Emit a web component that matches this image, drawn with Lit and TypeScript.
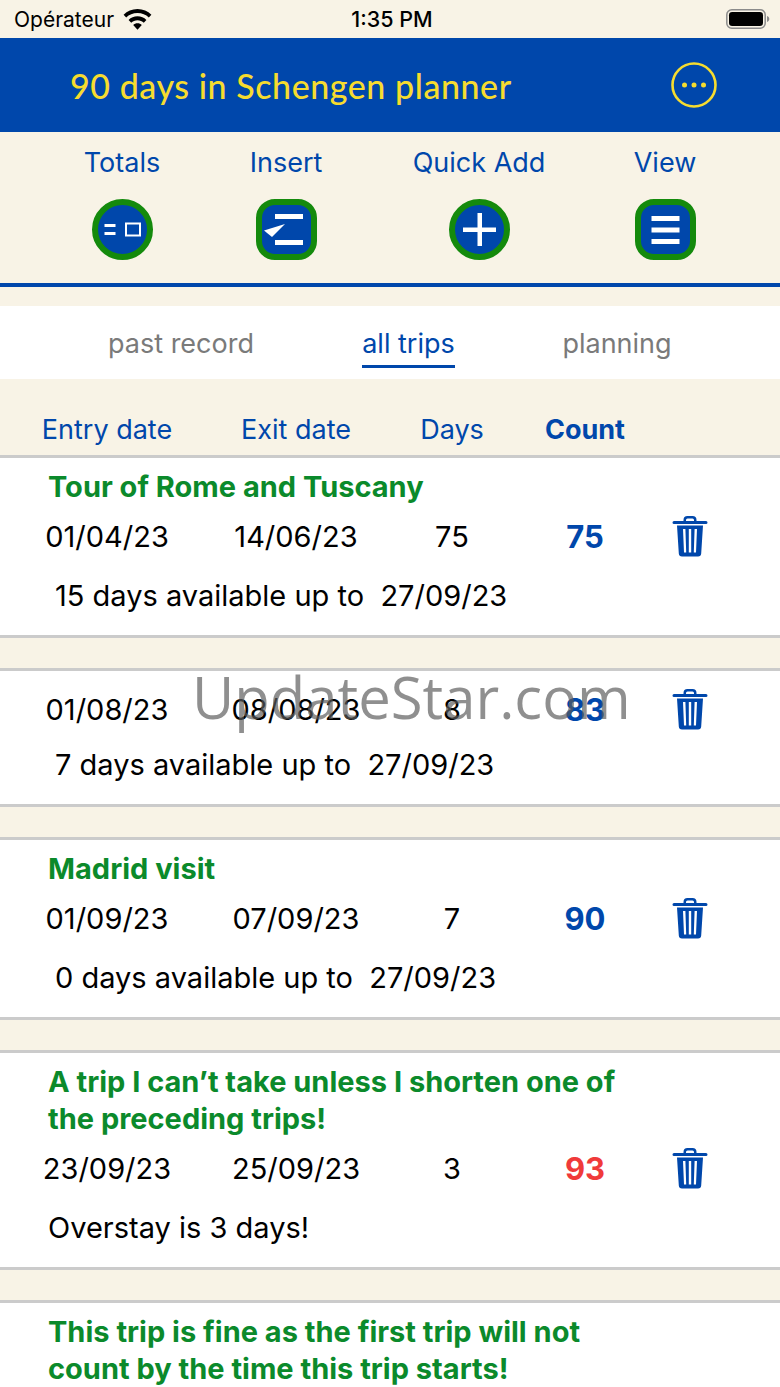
import { LitElement, html, css, svg } from "lit";
import { customElement } from "lit/decorators.js";

interface Trip {
  title?: string[];
  entry: string;
  exit: string;
  days: string;
  count: string;
  note: string;
  over?: boolean;
  gap?: string;
}

const trips: Trip[] = [
  { title: ["Tour of Rome and Tuscany"], entry: "01/04/23", exit: "14/06/23", days: "75", count: "75", note: "15 days available up to  27/09/23" },
  { entry: "01/08/23", exit: "08/08/23", days: "8", count: "83", note: "7 days available up to  27/09/23", gap: "short" },
  { title: ["Madrid visit"], entry: "01/09/23", exit: "07/09/23", days: "7", count: "90", note: "0 days available up to  27/09/23" },
  { title: ["A trip I can’t take unless I shorten one of", "the preceding trips!"], entry: "23/09/23", exit: "25/09/23", days: "3", count: "93", note: "Overstay is 3 days!", over: true },
  { title: ["This trip is fine as the first trip will not", "count by the time this trip starts!"], entry: "", exit: "", days: "", count: "", note: "" },
];

const trash = svg`<svg class="trash" viewBox="0 0 36 41" width="36" height="41">
  <path fill="#0047ab" d="M11.5 5V4a4 4 0 0 1 4-4h5a4 4 0 0 1 4 4v1H34a1.3 1.3 0 0 1 0 3H2a1.3 1.3 0 0 1 0-3zM14 5h8V4a1.5 1.5 0 0 0-1.5-1.5h-5A1.5 1.5 0 0 0 14 4z"/>
  <path fill="#0047ab" fill-rule="evenodd" d="M5 9.5h26l-1.8 28a3.2 3.2 0 0 1-3.2 3H10a3.2 3.2 0 0 1-3.2-3zM11 13l1 23.5h2.2L13.4 13zM16.8 13v23.5h2.4V13zM22.6 13l-.8 23.5H24L25 13z"/>
</svg>`;

const icons = {
  totals: svg`<rect x="12.5" y="25" width="11" height="3" fill="#fff"/><rect x="12.5" y="33" width="11" height="3" fill="#fff"/><rect x="34" y="24.5" width="14" height="12" fill="none" stroke="#fff" stroke-width="2"/>`,
  insert: svg`<rect x="19" y="15" width="28" height="5" fill="#fff"/><rect x="19" y="41" width="28" height="5" fill="#fff"/><path d="M8 31.5 29 25 16 38z" fill="#fff"/>`,
  add: svg`<rect x="14" y="28.5" width="33" height="4.5" fill="#fff"/><rect x="28.5" y="14" width="4.5" height="33" fill="#fff"/>`,
  view: svg`<rect x="16.5" y="17" width="28" height="5" fill="#fff"/><rect x="16.5" y="28.5" width="28" height="5" fill="#fff"/><rect x="16.5" y="40" width="28" height="5" fill="#fff"/>`,
};

@customElement("app-root")
export class AppRoot extends LitElement {
  static styles = css`
    :host {
      display: block;
      width: 780px;
      height: 1387px;
      overflow: hidden;
      position: relative;
      background: #f8f3e6;
      font-family: Inter, "Liberation Sans", sans-serif;
      color: #000;
    }
    .status {
      height: 38px;
      display: grid;
      grid-template-columns: 1fr auto 1fr;
      align-items: center;
      padding: 0 10px 0 14px;
      font-size: 21px;
      font-weight: 400;
    }
    .status-left { display: flex; align-items: center; gap: 9px; }
    .status-right { display: flex; justify-content: flex-end; }
    .time { font-weight: 500; font-size: 21.5px; }
    .nav {
      height: 94px;
      background: #0047ab;
      display: flex;
      align-items: center;
      justify-content: space-between;
      padding: 0 63px 0 70px;
      box-sizing: border-box;
    }
    .nav-title {
      font-family: Lato, sans-serif;
      color: #f6dc2f;
      font-size: 34px;
      font-weight: 500;
      letter-spacing: 0.55px;
    }
    .tools {
      display: grid;
      grid-template-columns: 164px 164px 222px 150px;
      padding: 16px 0 0 40px;
      height: 151px;
      box-sizing: border-box;
      border-bottom: 4px solid #0047ab;
      height: 155px;
    }
    .tool {
      display: flex;
      flex-direction: column;
      align-items: center;
      gap: 21px;
      color: #0047ab;
      font-size: 27px;
      line-height: 30px;
    }
    .tool-icon {
      width: 61px;
      height: 61px;
      box-sizing: border-box;
      background: #0047ab;
      border: 6px solid #148a0c;
      position: relative;
      display: block;
    }
    .tool-icon svg { position: absolute; left: -6px; top: -6px; }
    .round { border-radius: 50%; }
    .squircle { border-radius: 19px; }
    .tabs {
      margin-top: 19px;
      height: 73px;
      background: #fff;
      display: grid;
      grid-template-columns: 242px 213px 204px;
      padding-left: 60px;
      align-items: start;
      font-size: 27px;
      color: #7a7a7a;
    }
    .tab { justify-self: center; padding-top: 21px; line-height: 33px; height: 38px; box-sizing: content-box; }
    .tab.on { color: #0047ab; border-bottom: 3px solid #0047ab; padding-top: 21px; height: 38px; }
    .cols, .row {
      display: grid;
      grid-template-columns: 186px 192px 120px 146px 64px;
      padding-left: 14px;
      align-items: center;
      justify-items: center;
    }
    .cols {
      color: #0047ab;
      font-size: 27px;
      line-height: 32px;
      padding-top: 35px;
      padding-bottom: 9px;
    }
    .cols b { font-weight: 700; }
    .card {
      background: #fff;
      border-top: 3px solid #cbcbcb;
      border-bottom: 3px solid #cbcbcb;
      margin-bottom: 30px;
      padding: 10px 0 0;
      box-sizing: border-box;
    }
    .title {
      color: #0b8a2b;
      font-weight: 700;
      font-size: 29px;
      line-height: 37px;
      padding-left: 48px;
      margin-bottom: 11px;
    }
    .row { font-size: 29px; line-height: 37px; }
    .count { font-weight: 700; font-size: 31px; color: #0047ab; }
    .count.red { color: #f03a3a; }
    .trash { display: block; }
    .note {
      font-size: 29px;
      line-height: 37px;
      white-space: pre;
      padding-left: 55px;
      margin-top: 20px;
      padding-bottom: 21px;
    }
    .note.flush { padding-left: 48px; }
    .card.short { padding-top: 18px; }
    .card.short .note { margin-top: 16px; padding-bottom: 21px; }
    .watermark {
      position: absolute;
      left: 192px;
      top: 658px;
      font-family: "Open Sans", sans-serif;
      font-size: 58px;
      line-height: 78px;
      font-weight: 400;
      color: rgba(90, 90, 90, 0.68);
      white-space: nowrap;
      pointer-events: none;
    }
  `;

  private tool(label: string, shape: string, icon: unknown) {
    return html`<div class="tool">
      <span>${label}</span>
      <span class="tool-icon ${shape}"><svg viewBox="0 0 61 61" width="61" height="61">${icon}</svg></span>
    </div>`;
  }

  private card(t: Trip) {
    return html`<section class="card ${t.gap ?? ""}">
      ${t.title ? html`<div class="title">${t.title.map((l) => html`<div>${l}</div>`)}</div>` : ""}
      <div class="row">
        <span>${t.entry}</span><span>${t.exit}</span><span>${t.days}</span>
        <span class="count ${t.over ? "red" : ""}">${t.count}</span>${trash}
      </div>
      <div class="note ${t.over ? "flush" : ""}">${t.note}</div>
    </section>`;
  }

  render() {
    return html`
      <div class="status">
        <div class="status-left">
          <span>Opérateur</span>
          <svg width="29" height="21" viewBox="0 0 29 21">
            <path d="M14.5 0C9 0 4.2 2.2.6 5.7l2.6 2.8C6.1 5.7 10 4 14.5 4s8.4 1.7 11.3 4.5l2.6-2.8C24.8 2.2 20 0 14.5 0z"/>
            <path d="M14.5 7.3c-3.5 0-6.6 1.4-8.9 3.6l2.6 2.8c1.6-1.6 3.8-2.5 6.3-2.5s4.7.9 6.3 2.5l2.6-2.8c-2.3-2.2-5.4-3.6-8.9-3.6z"/>
            <path d="M14.5 14.2c-1.7 0-3.2.7-4.3 1.7l4.3 4.8 4.3-4.8c-1.1-1-2.6-1.7-4.3-1.7z"/>
          </svg>
        </div>
        <span class="time">1:35 PM</span>
        <div class="status-right">
          <svg width="44" height="20" viewBox="0 0 44 20">
            <rect x="0.8" y="0.8" width="38.4" height="18.4" rx="5" fill="none" stroke="#8b8b8b" stroke-width="1.5"/>
            <rect x="3" y="3" width="34" height="14" rx="3.2" fill="#000"/>
            <path d="M41 7v6c1.4-.4 2.3-1.6 2.3-3S42.400 7.400 41 7z" fill="#8b8b8b"/>
          </svg>
        </div>
      </div>
      <header class="nav">
        <span class="nav-title">90 days in Schengen planner</span>
        <svg width="46" height="46" viewBox="0 0 46 46">
          <circle cx="23" cy="23" r="21.5" fill="none" stroke="#f6dc2f" stroke-width="2.6"/>
          <circle cx="13.500" cy="23" r="2.500" fill="#f6dc2f"/>
          <circle cx="23" cy="23" r="2.500" fill="#f6dc2f"/>
          <circle cx="32.500" cy="23" r="2.500" fill="#f6dc2f"/>
        </svg>
      </header>
      <div class="tools">
        ${this.tool("Totals", "round", icons.totals)}
        ${this.tool("Insert", "squircle", icons.insert)}
        ${this.tool("Quick Add", "round", icons.add)}
        ${this.tool("View", "squircle", icons.view)}
      </div>
      <nav class="tabs">
        <span class="tab">past record</span>
        <span class="tab on">all trips</span>
        <span class="tab">planning</span>
      </nav>
      <div class="cols">
        <span>Entry date</span><span>Exit date</span><span>Days</span><b>Count</b>
      </div>
      ${trips.map((t) => this.card(t))}
      <div class="watermark">UpdateStar.com</div>
    `;
  }
}
